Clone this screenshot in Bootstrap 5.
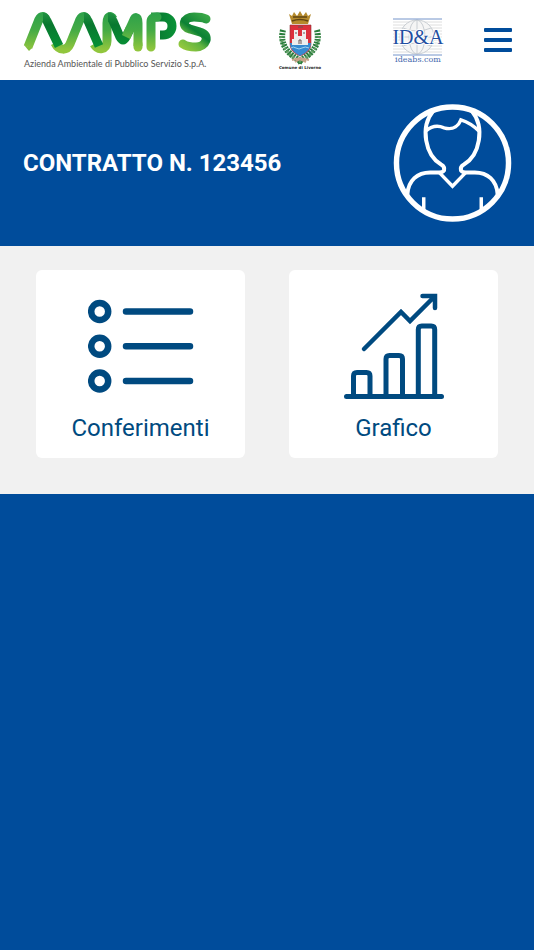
<!DOCTYPE html>
<html lang="it">
<head>
<meta charset="utf-8">
<meta name="viewport" content="width=device-width, initial-scale=1">
<title>AAMPS - Contratto</title>
<link href="https://cdn.jsdelivr.net/npm/bootstrap@5.3.0/dist/css/bootstrap.min.css" rel="stylesheet">
<style>
  :root { --brand: #004c9b; --ink: #004a80; }
  body { background: var(--brand); font-family: Roboto, "Liberation Sans", sans-serif; }
  .topbar { min-height: 80px; padding: 0 22px 0 23px; }
  .crest { margin-right: 14%; }
  .partner { margin-right: 8%; }
  .menu-btn { color: var(--brand); line-height: 0; }
  .contract { background: var(--brand); padding: 24px 22px 24px 23px; min-height: 166px; }
  .contract h1 { font-size: 24px; line-height: 32px; }
  .tiles { background: #f1f1f1; padding: 24px 36px 36px; }
  .tiles .row { --bs-gutter-x: 44px; }
  .tile { border-radius: 6px; color: var(--ink); font-size: 24px; line-height: 32px; padding: 22px 12px 14px; }
  .tile:hover { color: var(--brand); }
  .tile svg { margin-bottom: 12px; }
</style>
</head>
<body>
<header class="topbar bg-white d-flex align-items-center">
  <a href="#" aria-label="AAMPS" class="d-flex me-auto">
    <svg width="190" height="80" viewBox="23 0 190 80" fill="none" stroke-width="9">
      <defs>
        <linearGradient id="up" gradientUnits="userSpaceOnUse" x1="0" y1="50" x2="0" y2="14"><stop stop-color="#91c63d"/><stop offset=".55" stop-color="#45ab45"/><stop offset="1" stop-color="#2fa24a"/></linearGradient>
        <linearGradient id="down" gradientUnits="userSpaceOnUse" x1="0" y1="14" x2="0" y2="50"><stop stop-color="#1f8f40"/><stop offset=".3" stop-color="#08782f"/><stop offset="1" stop-color="#079335"/></linearGradient>
        <linearGradient id="bowl" gradientUnits="userSpaceOnUse" x1="150" y1="0" x2="177" y2="0"><stop stop-color="#35a548"/><stop offset=".3" stop-color="#087b31"/><stop offset="1" stop-color="#0a9438"/></linearGradient>
        <linearGradient id="curve" gradientUnits="userSpaceOnUse" x1="182" y1="50" x2="207" y2="16"><stop stop-color="#9acb3d"/><stop offset=".35" stop-color="#62b441"/><stop offset=".55" stop-color="#0b8134"/><stop offset="1" stop-color="#3aa747"/></linearGradient>
      </defs>
      <g stroke="url(#up)">
        <path d="M55 43C59 51 67 51 70 44L79 22C81 16 84 15 87 19"/>
        <path d="M94 44C98 51 107 50 107 41V23C107 16 111 15 113 19"/>
        <path d="M28 47 38 22C40 16 43 15 46 19"/>
      </g>
      <g stroke="url(#down)" stroke-width="9">
        <path d="M43 17Q45 17 47 21L59 46"/>
        <path d="M84 17Q86 17 88 21L99 46"/>
        <path d="M108 17Q111 17 113 21L120 37Q123 43 126 37L130 29"/>
      </g>
      <path d="M126 37 133 22C135 16 138 16 138 23V46" stroke="url(#up)"/>
      <path d="M138 44V47" stroke="url(#up)" stroke-linecap="round"/>
      <path d="M151 17H163C175 17 175 35 163 35H160" stroke="url(#bowl)"/>
      <path d="M151 47V22Q151 17 157 17" stroke="url(#up)" stroke-linecap="round"/>
      <path d="M206 19Q202 17 194 17C183 17 181 27 190 29L200 32C211 35 206 47 196 47Q187 47 183 44" stroke="url(#curve)" stroke-linecap="round"/>
      <path d="M24 45 32 48 29 51Z" fill="#83bf3e"/>
      <text x="24" y="67" fill="#555" font-family="Lato, sans-serif" font-size="9">Azienda Ambientale di Pubblico Servizio S.p.A.</text>
    </svg>
  </a>
  <a href="#" aria-label="Comune di Livorno" class="crest d-flex">
    <svg width="44" height="80" viewBox="276 0 44 80">
      <g fill="none" stroke="#287c3b" stroke-width="6" stroke-dasharray="2 1"><path d="M281 30Q276 50 301 62"/><path d="M315 30Q320 50 295 62"/></g>
      <g fill="none" stroke="#5e9c62" stroke-width="3" stroke-dasharray="2 2"><path d="M279 36Q282 56 301 62"/><path d="M317 36Q314 56 295 62"/></g>
      <path d="M287 14 290 16 292 12 295 16 298 11 301 16 304 12 306 16 309 14 306 24H290Z" fill="#b58a2c"/>
      <path d="M290 21Q298 18 306 21M291 17H305" stroke="#604512" fill="none" stroke-width="1.5"/>
      <path d="M288 25H309V44Q309 52 298 56Q288 52 288 44Z" fill="#dc303c" stroke="#8d3038" stroke-width=".6"/>
      <path d="M288 43H309Q309 51 298 56Q288 51 288 43Z" fill="#368bd1"/>
      <path d="M290 45V39H292V30H296V36H300V30H304V39H306V45Z" fill="#eee"/>
      <path d="M297 44V40H299V44M293 33H295M301 33H303M296 27H301" stroke="#655" fill="none"/>
      <path d="M289 48Q291 46 294 48T300 48T307 48" fill="none" stroke="#a3d2ee"/>
      <path d="M290 60 298 58 307 60M293 62 298 59 304 62" fill="none" stroke="#c8a48a" stroke-width="2"/>
      <text x="298" y="69" text-anchor="middle" fill="#222" font-family="DejaVu Sans, sans-serif" font-weight="700" font-size="4">Comune di Livorno</text>
    </svg>
  </a>
  <a href="#" aria-label="ID&amp;A ideabs.com" class="partner d-flex">
    <svg width="54" height="80" viewBox="392 0 54 80">
      <path d="M394 22H443M394 25H443M394 28H443M394 31H443M394 34H443M394 37H443M394 40H443M394 43H443M394 46H443M394 49H443M394 52H443" stroke="#dedede"/>
      <g fill="none" stroke="#c9ced3"><circle cx="418" cy="37" r="17" fill="#f5f5f5"/><ellipse cx="418" cy="37" rx="8" ry="17"/><path d="M418 20V54M401 37H435M404 28Q418 34 432 28M404 46Q418 40 432 46"/></g>
      <path d="M394 19H443M394 55H443" stroke="#7494ca"/>
      <text x="419" y="44" text-anchor="middle" fill="#1f4fa1" stroke="#fff" stroke-width="2" paint-order="stroke" font-family="Liberation Serif, serif" font-size="20">ID&amp;A</text>
      <text x="419" y="62" text-anchor="middle" fill="#4267ad" font-family="DejaVu Serif, serif" font-size="8">ideabs.com</text>
    </svg>
  </a>
  <button type="button" class="menu-btn btn border-0 p-0" aria-label="Menu">
    <svg width="28" height="26" viewBox="0 0 28 26" fill="currentColor"><rect y="1" width="28" height="4" rx="1"/><rect y="11" width="28" height="4" rx="1"/><rect y="21" width="28" height="4" rx="1"/></svg>
  </button>
</header>

<main>
  <section class="contract text-white d-flex align-items-center justify-content-between">
    <h1 class="fw-bold mb-0">CONTRATTO N. 123456</h1>
    <svg width="119" height="118" viewBox="393 104 119 119" fill="none" stroke="#fff" stroke-width="4" role="img" aria-label="Profilo utente">
      <circle cx="452.500" cy="163.500" r="56.500" stroke-width="5.500"/>
      <path d="M433 111Q423 123 426 141C428 153 434 161 441 165Q445 167 444 171Q443 173 439 173H430C417 173 408 181 407 195M472 111Q482 123 479 141C477 153 471 161 464 165Q460 167 461 171Q462 173 466 173H475C488 173 497 181 498 195"/>
      <path d="M426 131Q434 124 444 128C454 131 459 125 461 120Q471 123 480 132M439 173 452.500 187 466 173M423.500 198V212M481.500 198V212" stroke-width="3.500"/>
      <path d="M434 111Q452 102 471 111" stroke-width="3"/>
    </svg>
  </section>

  <section class="tiles">
    <div class="row row-cols-2">
      <div class="col">
        <a href="#" class="tile bg-white d-flex flex-column align-items-center text-decoration-none h-100">
          <svg width="106" height="108" viewBox="88 292 106 108" fill="none" stroke="currentColor">
            <g stroke-width="6.500"><circle cx="99.700" cy="311.500" r="8.500"/><circle cx="99.700" cy="346.200" r="8.500"/><circle cx="99.700" cy="381" r="8.500"/></g>
            <path d="M126 311.500H190M126 346.200H190M126 381H190" stroke-width="6.500" stroke-linecap="round"/>
          </svg>
          <span>Conferimenti</span>
        </a>
      </div>
      <div class="col">
        <a href="#" class="tile bg-white d-flex flex-column align-items-center text-decoration-none h-100">
          <svg width="100" height="108" viewBox="344 292 100 108" fill="none" stroke="currentColor" stroke-width="5" stroke-linecap="round">
            <path d="M346.500 396.500H441.500"/>
            <path d="M353.500 396V376Q353.500 372.500 357 372.500H366.500Q370 372.500 370 376V396M386 396V359Q386 355.500 389.500 355.500H399Q402.500 355.500 402.500 359V396M418.300 396V329.500Q418.300 326 421.800 326H431.200Q434.700 326 434.700 329.500V396"/>
            <path d="M364 349 401 312 410 321 434 297M422.500 296H435V308" stroke-width="4.500"/>
          </svg>
          <span>Grafico</span>
        </a>
      </div>
    </div>
  </section>
</main>
<script src="https://cdn.jsdelivr.net/npm/bootstrap@5.3.0/dist/js/bootstrap.bundle.min.js"></script>
</body>
</html>
